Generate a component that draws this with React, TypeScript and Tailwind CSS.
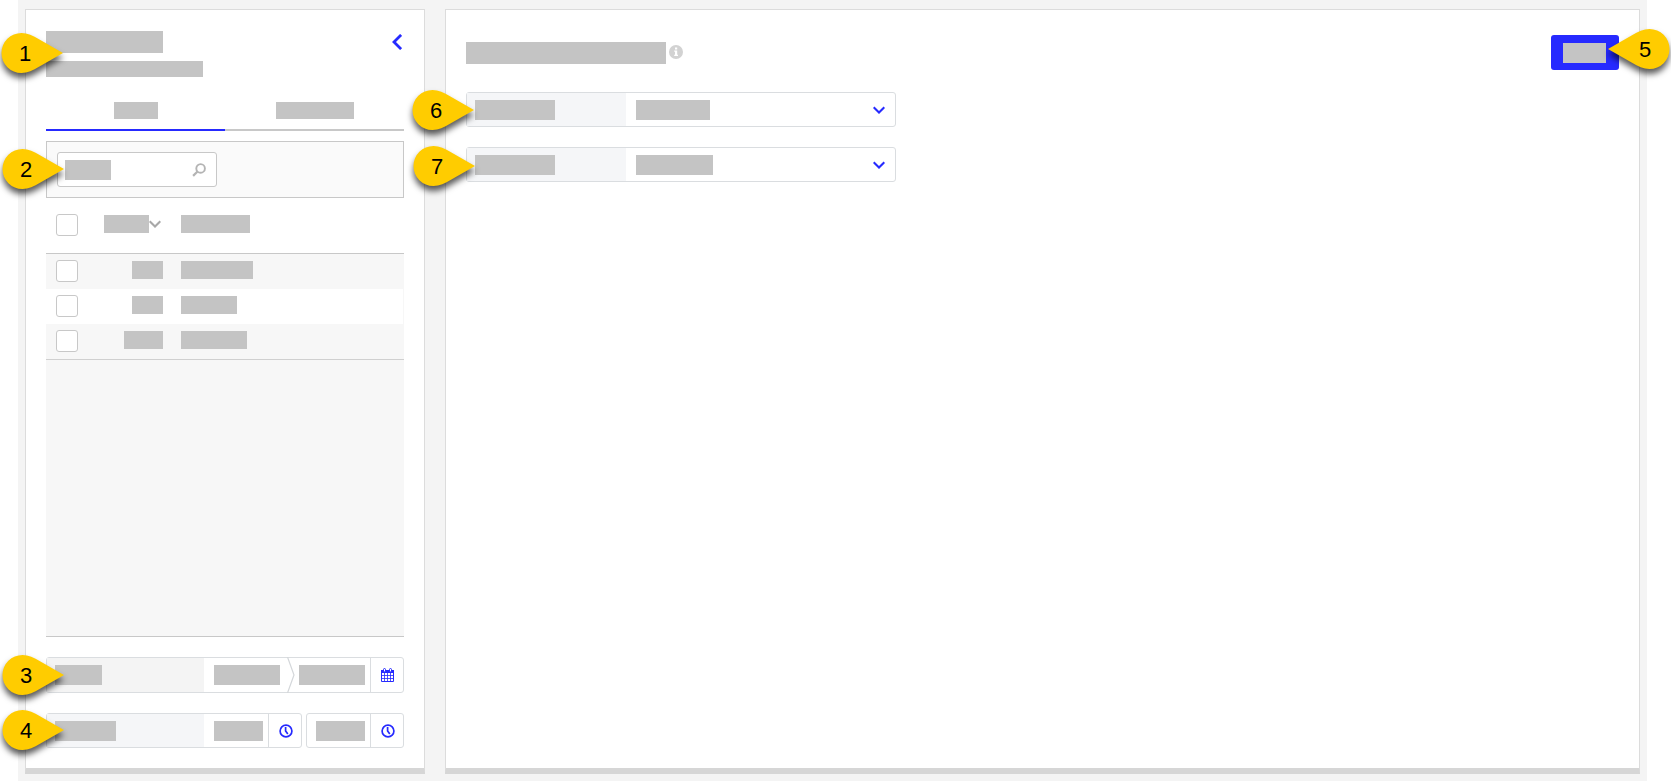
import type { ReactNode } from 'react';
import clsx from 'clsx';

const ROWS = [
  { id: 'w-[31px]', name: 'w-[72px]' },
  { id: 'w-[31px]', name: 'w-[56px]' },
  { id: 'w-[39px]', name: 'w-[66px]' },
];

// grey block standing in for a piece of text
function Bar({ className }: { className: string }) {
  return <span className={clsx('block shrink-0 bg-[#c4c4c4]', className)} />;
}

function Pin({ n, flip, className }: { n: number; flip?: boolean; className: string }) {
  return (
    <div className={clsx('absolute z-10 h-10 w-[62px] pointer-events-none', className)}>
      <svg
        viewBox="0 0 62 40"
        className={clsx('absolute inset-0 h-10 w-[62px] overflow-visible drop-shadow-[0px_5px_3px_rgba(0,0,0,0.65)]', flip && '-scale-x-100')}
      >
        <path d="M62 20 L38 33.700 C32 37.500 26.500 40 20.500 40 A20 20 0 0 1 20.500 0 C26.500 0 32 2.500 38 6.300 Z" fill="#fc0" />
      </svg>
      <span className={clsx('absolute top-px text-[22px] leading-10 text-black', flip ? 'left-[31px]' : 'left-[18px]')}>{n}</span>
    </div>
  );
}

function Check({ label }: { label: string }) {
  return (
    <input
      type="checkbox"
      aria-label={label}
      className="block h-[22px] w-[22px] appearance-none rounded-[3px] border border-[#c8c8c8] bg-white checked:bg-[#262aff]"
    />
  );
}

function Chevron({ className }: { className?: string }) {
  return (
    <svg viewBox="0 0 12 8" className={clsx('h-2 w-3 shrink-0', className)} fill="none" stroke="currentColor" strokeWidth="2.100">
      <path d="M0.700 1.200 L6 6.500 L11.300 1.200" />
    </svg>
  );
}

function ClockIcon() {
  return (
    <svg viewBox="0 0 14 14" className="h-3.5 w-3.5" fill="none" stroke="#262aff">
      <circle cx="7" cy="7" r="5.900" strokeWidth="1.700" />
      <path d="M6.600 3 V7 L8.800 10" strokeWidth="1.700" />
    </svg>
  );
}

function CalendarIcon() {
  return (
    <svg viewBox="0 0 13 14" className="h-3.5 w-[13px]" fill="none" stroke="#262aff">
      <path d="M0.500 2.500 H12.500 V13.500 H0.500 Z" fill="#fff" />
      <path d="M0 2 H13 V5 H0 Z" fill="#262aff" stroke="none" />
      <path d="M0.500 7.500 H12.500 M0.500 10.500 H12.500 M3.500 5 V13.500 M6.500 5 V13.500 M9.500 5 V13.500" strokeWidth="0.800" />
      <rect x="2.500" y="0.500" width="2" height="3.500" rx="1" fill="#fff" />
      <rect x="8.500" y="0.500" width="2" height="3.500" rx="1" fill="#fff" />
    </svg>
  );
}

function IconButton({ label, children }: { label: string; children: ReactNode }) {
  return (
    <button type="button" aria-label={label} className="flex w-[33px] items-center justify-center self-stretch border-l border-[#dadde0] pl-px">
      {children}
    </button>
  );
}

// text box with its value drawn as a bar
function BarInput({ label, bar, className }: { label: string; bar: string; className: string }) {
  return (
    <div className={clsx('relative flex items-center self-stretch', className)}>
      <Bar className={clsx('h-5', bar)} />
      <input type="text" aria-label={label} className="absolute inset-0 w-full bg-transparent outline-none" />
    </div>
  );
}

function SelectField({ id, pin, pinClass, value }: { id: string; pin: number; pinClass: string; value: string }) {
  return (
    <div className="relative flex h-[35px] w-[430px] rounded-[3px] border border-[#dadde0] bg-white">
      <label htmlFor={id} className="flex w-[159px] items-center bg-[#f5f6f8] pl-2">
        <Bar className="h-5 w-20" />
      </label>
      <div className="relative flex flex-1 items-center justify-between px-2.5">
        <Bar className={clsx('h-5', value)} />
        <Chevron className="text-[#262aff]" />
        <select id={id} aria-label={id} className="absolute inset-0 w-full appearance-none bg-transparent outline-none" />
      </div>
      <Pin n={pin} className={pinClass} />
    </div>
  );
}

function Sidebar() {
  return (
    <aside className="flex w-[400px] shrink-0 flex-col border border-b-[6px] border-[#dcdcdc] border-b-[#d6d6d6] bg-white px-5 pt-[21px] pb-5">
      <header className="relative flex justify-between">
        <div className="flex flex-col gap-2">
          <Bar className="h-[22px] w-[117px]" />
          <Bar className="h-4 w-[157px]" />
        </div>
        <button type="button" aria-label="Collapse" className="mt-[3px] mr-0.5 h-4 w-2.5 text-[#262aff]">
          <svg viewBox="0 0 10 16" className="h-4 w-2.5" fill="none" stroke="currentColor" strokeWidth="2.800">
            <path d="M9.100 0.900 L2 8 L9.100 15.100" />
          </svg>
        </button>
        <Pin n={1} className="top-0.5 -left-[45px]" />
      </header>

      <nav className="mt-4 flex">
        <button type="button" aria-label="First tab" className="flex flex-1 justify-center border-b-2 border-[#262aff] pt-[9px] pb-2.5">
          <Bar className="h-[17px] w-11" />
        </button>
        <button type="button" aria-label="Second tab" className="flex flex-1 justify-center border-b-2 border-[#c8c8c8] pt-[9px] pb-2.5">
          <Bar className="h-[17px] w-[78px]" />
        </button>
      </nav>

      <div className="relative mt-2.5 border border-[#c8c8c8] bg-[#fafafa] p-2.5">
        <div className="relative flex h-[35px] w-40 items-center justify-between rounded-[3px] border border-[#c8c8c8] bg-white pl-[7px] pr-2.5">
          <Bar className="h-5 w-[46px]" />
          <svg viewBox="0 0 14 14" className="h-3.5 w-3.5" fill="none" stroke="#b4b4b4">
            <circle cx="8.600" cy="5.400" r="4.300" strokeWidth="1.900" />
            <path d="M5.500 8.500 L1.100 12.900" strokeWidth="2.200" />
          </svg>
          <input type="search" aria-label="Search" className="absolute inset-0 w-full bg-transparent outline-none" />
        </div>
        <Pin n={2} className="top-[7px] -left-[45px]" />
      </div>

      <div className="flex flex-1 flex-col border-b border-[#c8c8c8] bg-[#f7f7f7]">
        <table className="w-full table-fixed border-separate border-spacing-0">
          <thead>
            <tr className="h-14 bg-white">
              <th className="w-[42px] border-b border-[#c8c8c8] p-0 pb-0.5 pl-2.5"><Check label="Select all" /></th>
              <th className="w-[75px] border-b border-[#c8c8c8] p-0 pb-[3px]">
                <button type="button" aria-label="Sort" className="ml-auto flex items-center pr-0.5 text-[#a8a8a8]">
                  <Bar className="h-[18px] w-[45px]" />
                  <Chevron />
                </button>
              </th>
              <th className="border-b border-[#c8c8c8] p-0 pb-[3px] pl-[18px]"><Bar className="h-[18px] w-[69px]" /></th>
            </tr>
          </thead>
          <tbody>
            {ROWS.map((row, i) => (
              <tr key={i} className="h-[35px] odd:bg-[#f7f7f7] even:bg-white">
                <td className="p-0 pb-0.5 pl-2.5"><Check label={`Select row ${i + 1}`} /></td>
                <td className="p-0 pb-[3px]"><Bar className={clsx('ml-auto h-[18px]', row.id)} /></td>
                <td className="border-r border-[#f7f7f7] p-0 pb-[3px] pl-[18px]"><Bar className={clsx('h-[18px]', row.name)} /></td>
              </tr>
            ))}
          </tbody>
        </table>
        <div className="border-t border-[#d0d0d0]" />
      </div>

      <div className="relative mt-5 flex h-9 items-center rounded-[3px] border border-[#dadde0]">
        <div className="flex w-[157px] items-center self-stretch bg-[#f4f4f4] pl-2">
          <Bar className="h-5 w-[47px]" />
        </div>
        <BarInput label="Start date" bar="w-[66px]" className="w-[82px] pl-2.5" />
        <svg viewBox="0 0 9 36" className="h-9 w-[9px] shrink-0" fill="none" stroke="#d4d7da" strokeWidth="1.200">
          <path d="M1.500 0 L8 18 L1.500 36" />
        </svg>
        <BarInput label="End date" bar="w-[66px]" className="flex-1 pl-1" />
        <IconButton label="Open calendar"><CalendarIcon /></IconButton>
        <Pin n={3} className="-top-[3px] -left-[45px]" />
      </div>

      <div className="relative mt-5 flex h-[35px] gap-1">
        <div className="flex flex-1 rounded-[3px] border border-[#dadde0]">
          <div className="flex w-[157px] items-center bg-[#f5f6f8] pl-2">
            <Bar className="h-5 w-[61px]" />
          </div>
          <BarInput label="Start time" bar="w-[49px]" className="flex-1 pl-2.5" />
          <IconButton label="Pick start time"><ClockIcon /></IconButton>
        </div>
        <div className="flex w-[98px] rounded-[3px] border border-[#dadde0]">
          <BarInput label="End time" bar="w-[49px]" className="flex-1 pl-[9px]" />
          <IconButton label="Pick end time"><ClockIcon /></IconButton>
        </div>
        <Pin n={4} className="-top-[3px] -left-11" />
      </div>
    </aside>
  );
}

export default function App() {
  return (
    <div className="min-h-screen bg-white pr-6 pl-[18px] font-['Liberation_Sans',Arial,sans-serif]">
      <div className="flex min-h-screen gap-5 bg-[#f4f4f4] px-[7px] pt-[9px] pb-[7px]">
        <Sidebar />

        <main className="min-w-0 flex-1 border border-b-[6px] border-[#dcdcdc] border-b-[#d6d6d6] bg-white px-5 pt-[25px] pb-5">
          <header className="flex items-center justify-between">
            <div className="flex items-start gap-[3px]">
              <Bar className="h-[22px] w-[200px]" />
              <svg viewBox="0 0 14 14" className="mt-[3px] h-3.5 w-3.5">
                <circle cx="7" cy="7" r="7" fill="#d2d2d2" />
                <path d="M6 2.500 H8.200 V4.500 H6 Z M5.200 5.600 H8.200 V9.800 H9 V11 H5.200 V9.800 H6 V6.800 H5.200 Z" fill="#fff" />
              </svg>
            </div>
            <div className="relative">
              <button type="button" aria-label="Apply" className="flex h-[35px] w-[68px] items-center rounded-[3px] bg-[#262aff] pl-3">
                <Bar className="h-5 w-[43px]" />
              </button>
              <Pin n={5} flip className="-top-1.5 -right-[51px]" />
            </div>
          </header>

          <div className="mt-[22px] flex flex-col gap-5">
            <SelectField id="first-field" pin={6} pinClass="-top-[3px] -left-[55px]" value="w-[74px]" />
            <SelectField id="second-field" pin={7} pinClass="-top-0.5 -left-[54px]" value="w-[77px]" />
          </div>
        </main>
      </div>
    </div>
  );
}
